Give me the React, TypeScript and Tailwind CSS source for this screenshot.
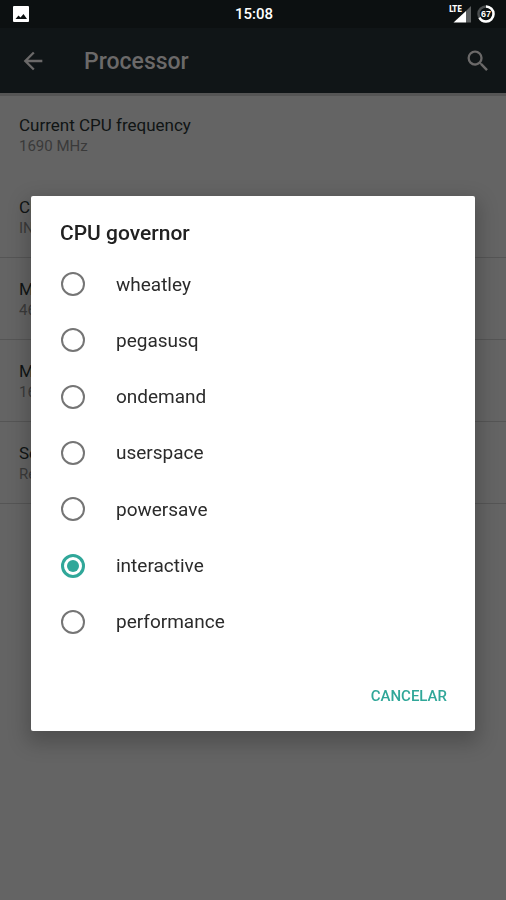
import { useState } from "react";

const governors = [
  "wheatley",
  "pegasusq",
  "ondemand",
  "userspace",
  "powersave",
  "interactive",
  "performance",
];

const settings = [
  { title: "Current CPU frequency", value: "1690 MHz", divider: false },
  { title: "CPU governor", value: "INTERACTIVE", divider: true },
  { title: "Min CPU frequency", value: "468 MHz", divider: true },
  { title: "Max CPU frequency", value: "1690 MHz", divider: true },
  { title: "Set on boot", value: "Reapply settings", divider: true },
];

function StatusBar() {
  return (
    <div className="grid h-7 grid-cols-3 items-center bg-[#0c1011] pr-[11px] pl-[13px] text-white">
      <svg className="h-4 w-4" viewBox="0 0 16 16" aria-hidden="true">
        <rect width="16" height="16" rx="1" fill="#fff" />
        <path d="M2.500 13 5.500 9.500l2 2L10.500 8 14 13z" fill="#0c1011" />
      </svg>
      <span className="text-center text-[15px] leading-7 font-medium">15:08</span>
      <div className="flex items-center justify-end gap-[6px]">
        <div className="relative h-[18px] w-[22px]">
          <svg className="h-full w-full" viewBox="0 0 22 18" aria-hidden="true">
            <path d="M22 1v16.500H17V6z" fill="#5c5f60" />
            <path d="M17 6v11.500H4.500z" fill="#fff" />
          </svg>
          <span className="absolute top-0 left-0 font-['DejaVu_Sans_Condensed','Liberation_Sans',sans-serif] text-[8px] leading-[9px] font-bold">
            LTE
          </span>
        </div>
        <div className="relative h-[18px] w-[18px]">
          <svg className="h-full w-full" viewBox="0 0 18 18" fill="none" strokeWidth="2.500" aria-hidden="true">
            <circle cx="9" cy="9" r="7.500" stroke="#4c4f50" />
            <circle
              cx="9"
              cy="9"
              r="7.500"
              stroke="#fff"
              pathLength="100"
              strokeDasharray="67 33"
              transform="rotate(-90 9 9)"
            />
          </svg>
          <span className="absolute inset-0 text-center font-['Liberation_Sans_Narrow','Liberation_Sans',sans-serif] text-[9px] leading-[18px] font-bold">
            67
          </span>
        </div>
      </div>
    </div>
  );
}

function Toolbar() {
  return (
    <header className="flex h-[65px] items-center bg-[#101517] pr-3 pl-[17px] text-[#6b6969]">
      <button type="button" aria-label="Back" className="flex h-8 w-8 items-center justify-center">
        <svg className="h-7 w-7" viewBox="0 0 24 24" fill="currentColor" aria-hidden="true">
          <path d="M20 11H7.830l5.590-5.590L12 4l-8 8 8 8 1.410-1.410L7.830 13H20v-2z" />
        </svg>
      </button>
      <h1 className="ml-[35px] flex-1 pt-[3px] text-[23px] leading-8 font-medium">Processor</h1>
      <button type="button" aria-label="Search" className="flex h-8 w-8 items-center justify-center">
        <svg className="h-7 w-7" viewBox="0 0 24 24" fill="currentColor" aria-hidden="true">
          <path d="M15.500 14h-.79l-.28-.27A6.471 6.471 0 0 0 16 9.500 6.500 6.500 0 1 0 9.500 16c1.610 0 3.090-.59 4.230-1.570l.27.28v.79l5 4.990L20.490 19l-4.990-5zm-6 0C7.010 14 5 11.990 5 9.500S7.010 5 9.500 5 14 7.010 14 9.500 11.990 14 9.500 14z" />
        </svg>
      </button>
    </header>
  );
}

export default function App() {
  const [selected, setSelected] = useState("interactive");

  return (
    <div className="min-h-screen bg-[#646464] font-[Roboto,sans-serif]">
      <StatusBar />
      <Toolbar />
      <main className="border-t-[3px] border-[#555555]">
        <ul className="-mt-[2px]">
          {settings.map((s) => (
            <li
              key={s.title}
              className={`h-[82px] border-b px-[19px] pt-5 ${s.divider ? "border-[#555555]" : "border-transparent"}`}
            >
              <p className="text-[17px] leading-[22px] text-[#101414]">{s.title}</p>
              <p className="text-[15px] leading-5 text-[#3a3a3a]">{s.value}</p>
            </li>
          ))}
        </ul>
      </main>

      <div className="fixed inset-0 flex items-center justify-center px-[31px] pt-7 pb-px">
        <div
          role="dialog"
          aria-modal="true"
          aria-labelledby="dialog-title"
          className="w-full rounded-[2px] bg-white shadow-[0_8px_20px_4px_rgba(0,0,0,0.22)]"
        >
          <h2 id="dialog-title" className="px-[29px] pt-[21px] pb-[7px] text-[21px] leading-8 font-medium text-[#212121]">
            CPU governor
          </h2>
          <div role="radiogroup" aria-labelledby="dialog-title" className="grid h-[394px] auto-rows-fr">
            {governors.map((name) => (
              <label key={name} className="flex items-center gap-[31px] px-[30px] text-[19px] leading-6 text-[#2b2b2b]">
                <input
                  type="radio"
                  name="governor"
                  value={name}
                  checked={selected === name}
                  onChange={() => setSelected(name)}
                  className="flex h-6 w-6 appearance-none items-center justify-center rounded-full border-2 border-[#757575] before:h-3 before:w-3 before:rounded-full checked:border-3 checked:border-[#30a799] checked:before:bg-[#30a799]"
                />
                <span className="pt-px">{name}</span>
              </label>
            ))}
          </div>
          <div className="flex h-[81px] items-end justify-end px-5 pb-[17px]">
            <button type="button" className="px-2 text-[15px] leading-9 font-medium text-[#30a799]">
              CANCELAR
            </button>
          </div>
        </div>
      </div>
    </div>
  );
}
